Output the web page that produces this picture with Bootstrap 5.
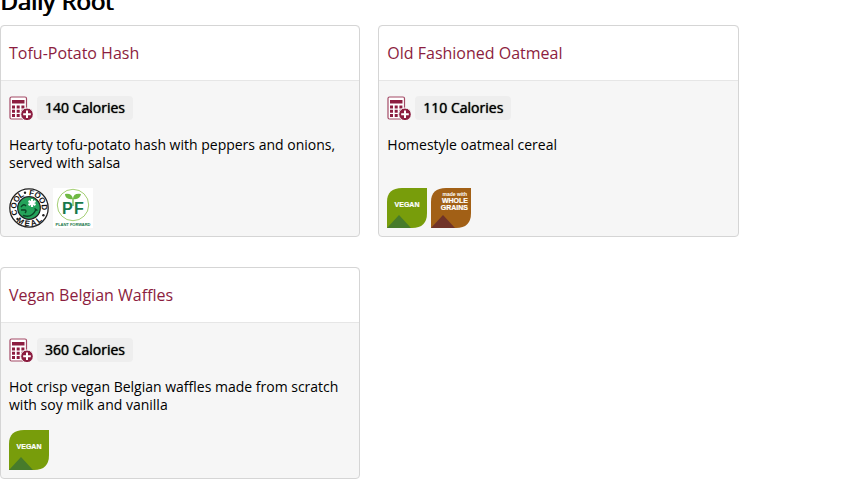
<!DOCTYPE html>
<html lang="en">
<head>
<meta charset="utf-8">
<meta name="viewport" content="width=device-width, initial-scale=1">
<title>Daily Root</title>
<link href="https://cdn.jsdelivr.net/npm/bootstrap@5.3.0/dist/css/bootstrap.min.css" rel="stylesheet">
<style>
body{font-family:"Open Sans","Liberation Sans",sans-serif;font-size:14px;line-height:18px;color:#000;background:#fff;overflow:hidden}
.station{width:87%;margin-top:-15px}
.station-title{font-size:24px;line-height:32px;font-weight:400;margin:0 0 8px;text-shadow:1px 0 0 currentColor}
.menu-grid{display:grid;grid-template-columns:1fr 1fr;column-gap:18px;row-gap:30px}
.menu-item{border:1px solid #d5d5d5;border-radius:4px;background:#f6f6f6;overflow:hidden}
.menu-item .card-header{background:#fff;border-bottom:1px solid #e6e6e6;padding:15px 8px 14px;line-height:24px}
.menu-item .card-header a{font-size:16px;color:#8c1d40}
.menu-item .card-body{padding:15px 8px 8px}
.calories{background:#eee;border-radius:4px;padding:3px 8px;text-shadow:0 0 1px currentColor}
.desc{margin:16px 0}
.calc-btn{line-height:0}
svg{display:block}
svg text{font-family:"Liberation Sans",sans-serif;font-weight:700}
</style>
<script src="https://cdn.jsdelivr.net/npm/bootstrap@5.3.0/dist/js/bootstrap.bundle.min.js"></script>
</head>
<body>
<svg width="0" height="0" class="position-absolute" aria-hidden="true">
<defs>
<symbol id="calc" viewBox="0 0 24 24">
<rect x="1" y="1" width="16.5" height="22" rx="1.5" fill="#fff" stroke="#a34a66" stroke-width="1.2"/>
<path fill="#8c1d40" d="M3 4h12.5v3.5H3zM3 9.5h3v3H3zM7.7 9.5h3v3h-3zM12.4 9.5h3v3h-3zM3 13.8h3v3H3zM7.7 13.8h3v3h-3zM12.4 13.8h3v3h-3zM3 18h3v3H3zM7.7 18h3v3h-3z"/>
<circle cx="18" cy="18.3" r="6.3" fill="#8c1d40" stroke="#f6f6f6"/>
<path d="M18 14.5v7.6M14.2 18.3h7.6" stroke="#fff" stroke-width="2"/>
</symbol>
<symbol id="vegan" viewBox="0 0 40 40">
<path d="M0 40V14Q0 0 15 0H40V25Q40 40 25 40Z" fill="#789d0b"/>
<path d="M0 40 12 27 24 40Z" fill="#477b2b"/>
<text x="20" y="19" font-size="7" text-anchor="middle" fill="#fff" stroke="#fff" stroke-width=".2">VEGAN</text>
</symbol>
<symbol id="grains" viewBox="0 0 40 40">
<path d="M0 40V14Q0 0 15 0H40V25Q40 40 25 40Z" fill="#a26016"/>
<path d="M0 40 12 27 24 40Z" fill="#703328"/>
<g fill="#fff" text-anchor="end"><text x="36" y="8" font-size="5">made with</text><text x="37" y="15" font-size="7" stroke="#fff" stroke-width=".2">WHOLE</text><text x="37" y="22" font-size="7" stroke="#fff" stroke-width=".2">GRAINS</text></g>
</symbol>
</defs>
</svg>
<main class="station">
<h2 class="station-title">Daily Root</h2>
<div class="menu-grid">
<article class="card menu-item">
<div class="card-header"><a href="#" class="text-decoration-none">Tofu-Potato Hash</a></div>
<div class="card-body">
<div class="d-flex align-items-center gap-1"><button type="button" class="calc-btn border-0 bg-transparent p-0" aria-label="Add Tofu-Potato Hash to calculator"><svg width="24" height="24"><use href="#calc"/></svg></button><span class="calories">140 Calories</span></div>
<p class="desc">Hearty tofu-potato hash with peppers and onions, served with salsa</p>
<div class="d-flex gap-1">
<svg width="40" height="40" viewBox="0 0 40 40" role="img" aria-label="Cool Food Meal">
<circle cx="20" cy="20" r="19.2" fill="#fff" stroke="#222" stroke-width="1.3"/>
<circle cx="20" cy="20" r="11.3" fill="#24a35a" stroke="#222" stroke-width="1.2"/>
<g font-size="8" fill="#111" text-anchor="middle">
<text transform="rotate(-107 20 20)" x="20" y="7.4">C</text><text transform="rotate(-80 20 20)" x="20" y="7.4">O</text><text transform="rotate(-54 20 20)" x="20" y="7.4">O</text><text transform="rotate(-32 20 20)" x="20" y="7.4">L</text>
<text transform="rotate(10 20 20)" x="20" y="7.4">F</text><text transform="rotate(34 20 20)" x="20" y="7.4">O</text><text transform="rotate(60 20 20)" x="20" y="7.4">O</text><text transform="rotate(87 20 20)" x="20" y="7.4">D</text>
<text transform="rotate(33 20 20)" x="20" y="38.2">M</text><text transform="rotate(7 20 20)" x="20" y="38.2">E</text><text transform="rotate(-17 20 20)" x="20" y="38.2">A</text><text transform="rotate(-40 20 20)" x="20" y="38.2">L</text>
</g>
<g fill="#222"><circle cx="16" cy="4.8" r="1.2"/><circle cx="8.5" cy="31" r="1.2"/><circle cx="34.4" cy="27.2" r="1.2"/></g>
<path d="M23 11v8M19.5 13l7 4M19.5 17l7-4" stroke="#fff" stroke-width="2.2"/>
<path d="M12 19q3-4 5-1M12 22h4q2 1 0 3M14 27.5q9 3 13-6M25.5 20.5l3 2" stroke="#0b4526" stroke-width="1.4" fill="none"/>
</svg>
<svg width="40" height="40" viewBox="0 0 40 40" role="img" aria-label="Plant Forward">
<path fill="#fff" d="M0 0h40v40H0z"/>
<circle cx="20" cy="17" r="15.7" fill="none" stroke="#a5cf75"/>
<path d="M20 18V11" stroke="#73b843" stroke-width="1.3"/>
<path d="M20 11Q12 12 12 6Q19 5 20 11ZM20 11Q20 5 28 6Q27 12 20 11Z" fill="#6fb943"/>
<text x="9" y="26" font-size="16" fill="#18784b">P</text><text x="21" y="26" font-size="16" fill="#18784b">F</text>
<text x="20" y="38" font-size="4" text-anchor="middle" fill="#18784b">PLANT FORWARD</text>
</svg>
</div>
</div>
</article>
<article class="card menu-item">
<div class="card-header"><a href="#" class="text-decoration-none">Old Fashioned Oatmeal</a></div>
<div class="card-body d-flex flex-column">
<div class="d-flex align-items-center gap-1"><button type="button" class="calc-btn border-0 bg-transparent p-0" aria-label="Add Old Fashioned Oatmeal to calculator"><svg width="24" height="24"><use href="#calc"/></svg></button><span class="calories">110 Calories</span></div>
<p class="desc">Homestyle oatmeal cereal</p>
<div class="d-flex gap-1 mt-auto"><svg width="40" height="40" role="img" aria-label="Vegan"><use href="#vegan"/></svg><svg width="40" height="40" role="img" aria-label="Made with whole grains"><use href="#grains"/></svg></div>
</div>
</article>
<article class="card menu-item">
<div class="card-header"><a href="#" class="text-decoration-none">Vegan Belgian Waffles</a></div>
<div class="card-body">
<div class="d-flex align-items-center gap-1"><button type="button" class="calc-btn border-0 bg-transparent p-0" aria-label="Add Vegan Belgian Waffles to calculator"><svg width="24" height="24"><use href="#calc"/></svg></button><span class="calories">360 Calories</span></div>
<p class="desc">Hot crisp vegan Belgian waffles made from scratch with soy milk and vanilla</p>
<div class="d-flex"><svg width="40" height="40" role="img" aria-label="Vegan"><use href="#vegan"/></svg></div>
</div>
</article>
</div>
</main>
</body>
</html>
